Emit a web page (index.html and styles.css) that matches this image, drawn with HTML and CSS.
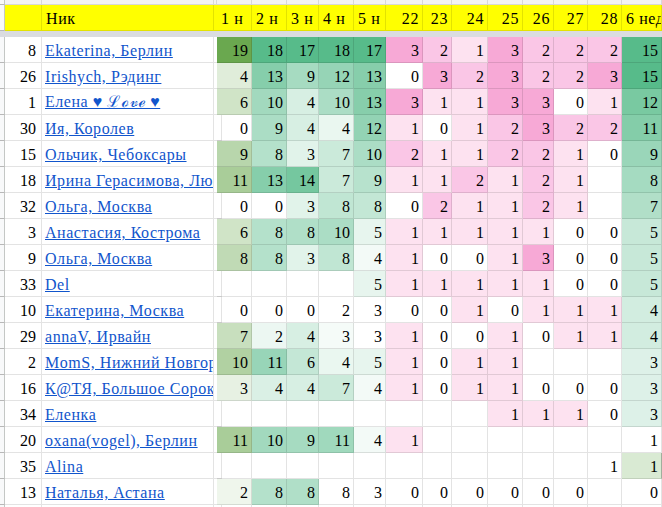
FILE: index.html
```html
<!DOCTYPE html>
<html lang="ru">
<head>
<meta charset="utf-8">
<title>Таблица</title>
<link rel="stylesheet" href="styles.css">
</head>
<body>
<div class="sheet">
  <div class="row top">
    <div class="rh"></div><div class="c"></div><div class="c"></div><div class="c"></div><div class="c"></div><div class="c"></div><div class="c"></div><div class="c"></div><div class="c"></div><div class="c"></div><div class="c"></div><div class="c"></div><div class="c"></div><div class="c"></div><div class="c"></div><div class="c"></div><div class="c"></div>
  </div>
  <div class="row hd">
    <div class="rh"></div><div class="c"></div><div class="c">Ник</div><div class="c"></div><div class="c">1 н</div><div class="c">2 н</div><div class="c">3 н</div><div class="c">4 н</div><div class="c">5 н</div><div class="c n">22</div><div class="c n">23</div><div class="c n">24</div><div class="c n">25</div><div class="c n">26</div><div class="c n">27</div><div class="c n">28</div><div class="c">6 нед</div>
  </div>
  <div class="sep"></div>

  <div class="row">
    <div class="rh"></div><div class="c n rk">8</div><div class="c nm"><a href="#">Ekaterina, Берлин</a></div><div class="c"></div>
    <div class="c n" style="background:#6aa84f">19</div><div class="c n" style="background:#57bb8a">18</div><div class="c n" style="background:#57bb8a">17</div><div class="c n" style="background:#57bb8a">18</div><div class="c n" style="background:#57bb8a">17</div>
    <div class="c n p3">3</div><div class="c n p2">2</div><div class="c n p1">1</div><div class="c n p3">3</div><div class="c n p2">2</div><div class="c n p2">2</div><div class="c n p2">2</div>
    <div class="c n" style="background:#57bb8a">15</div>
  </div>
  <div class="row">
    <div class="rh"></div><div class="c n rk">26</div><div class="c nm"><a href="#">Irishych, Рэдинг</a></div><div class="c"></div>
    <div class="c n" style="background:#e0edda">4</div><div class="c n" style="background:#86ceab">13</div><div class="c n" style="background:#a6dbc1">9</div><div class="c n" style="background:#96d4b6">12</div><div class="c n" style="background:#87ceab">13</div>
    <div class="c n">0</div><div class="c n p3">3</div><div class="c n p2">2</div><div class="c n p3">3</div><div class="c n p2">2</div><div class="c n p2">2</div><div class="c n p3">3</div>
    <div class="c n" style="background:#57bb8a">15</div>
  </div>
  <div class="row">
    <div class="rh"></div><div class="c n rk">1</div><div class="c nm"><a href="#">Елена ♥ ℒℴ𝓋ℯ ♥</a></div><div class="c"></div>
    <div class="c n" style="background:#d0e4c7">6</div><div class="c n" style="background:#a2d9be">10</div><div class="c n" style="background:#d7efe3">4</div><div class="c n" style="background:#abddc5">10</div><div class="c n" style="background:#87ceab">13</div>
    <div class="c n p3">3</div><div class="c n p1">1</div><div class="c n p1">1</div><div class="c n p3">3</div><div class="c n p3">3</div><div class="c n">0</div><div class="c n p1">1</div>
    <div class="c n" style="background:#79c9a1">12</div>
  </div>
  <div class="row">
    <div class="rh"></div><div class="c n rk">30</div><div class="c nm"><a href="#">Ия, Королев</a></div><div class="c"></div>
    <div class="c n">0</div><div class="c n" style="background:#abddc5">9</div><div class="c n" style="background:#d7efe3">4</div><div class="c n" style="background:#eaf7f0">4</div><div class="c n" style="background:#93d3b4">12</div>
    <div class="c n p1">1</div><div class="c n">0</div><div class="c n p1">1</div><div class="c n p2">2</div><div class="c n p3">3</div><div class="c n p2">2</div><div class="c n p2">2</div>
    <div class="c n" style="background:#84cda9">11</div>
  </div>
  <div class="row">
    <div class="rh"></div><div class="c n rk">15</div><div class="c nm"><a href="#">Ольчик, Чебоксары</a></div><div class="c"></div>
    <div class="c n" style="background:#b8d6ac">9</div><div class="c n" style="background:#b4e1cb">8</div><div class="c n" style="background:#e1f3ea">3</div><div class="c n" style="background:#cbeada">7</div><div class="c n" style="background:#abddc5">10</div>
    <div class="c n p2">2</div><div class="c n p1">1</div><div class="c n p1">1</div><div class="c n p2">2</div><div class="c n p2">2</div><div class="c n p1">1</div><div class="c n">0</div>
    <div class="c n" style="background:#9ad6b9">9</div>
  </div>
  <div class="row">
    <div class="rh"></div><div class="c n rk">18</div><div class="c nm"><a href="#">Ирина Герасимова, Люберцы</a></div><div class="c"></div>
    <div class="c n" style="background:#a9cd99">11</div><div class="c n" style="background:#86ceab">13</div><div class="c n" style="background:#75c79f">14</div><div class="c n" style="background:#cbeada">7</div><div class="c n" style="background:#b7e2cd">9</div>
    <div class="c n p1">1</div><div class="c n p1">1</div><div class="c n p2">2</div><div class="c n p1">1</div><div class="c n p2">2</div><div class="c n p1">1</div><div class="c n"></div>
    <div class="c n" style="background:#a5dbc1">8</div>
  </div>
  <div class="row">
    <div class="rh"></div><div class="c n rk">32</div><div class="c nm"><a href="#">Ольга, Москва</a></div><div class="c"></div>
    <div class="c n">0</div><div class="c n">0</div><div class="c n" style="background:#e1f3ea">3</div><div class="c n" style="background:#c0e6d3">8</div><div class="c n" style="background:#c3e7d5">8</div>
    <div class="c n">0</div><div class="c n p2">2</div><div class="c n p1">1</div><div class="c n p1">1</div><div class="c n p2">2</div><div class="c n p1">1</div><div class="c n"></div>
    <div class="c n" style="background:#b1dfc8">7</div>
  </div>
  <div class="row">
    <div class="rh"></div><div class="c n rk">3</div><div class="c nm"><a href="#">Анастасия, Кострома</a></div><div class="c"></div>
    <div class="c n" style="background:#d0e4c7">6</div><div class="c n" style="background:#b4e1cb">8</div><div class="c n" style="background:#b0dfc8">8</div><div class="c n" style="background:#abddc5">10</div><div class="c n" style="background:#e7f5ee">5</div>
    <div class="c n p1">1</div><div class="c n p1">1</div><div class="c n p1">1</div><div class="c n p1">1</div><div class="c n p1">1</div><div class="c n">0</div><div class="c n">0</div>
    <div class="c n" style="background:#c7e8d8">5</div>
  </div>
  <div class="row">
    <div class="rh"></div><div class="c n rk">9</div><div class="c nm"><a href="#">Ольга, Москва</a></div><div class="c"></div>
    <div class="c n" style="background:#c0dab5">8</div><div class="c n" style="background:#b4e1cb">8</div><div class="c n" style="background:#e1f3ea">3</div><div class="c n" style="background:#c0e6d3">8</div><div class="c n" style="background:#f3faf7">4</div>
    <div class="c n p1">1</div><div class="c n">0</div><div class="c n">0</div><div class="c n p1">1</div><div class="c n p3">3</div><div class="c n">0</div><div class="c n">0</div>
    <div class="c n" style="background:#c7e8d8">5</div>
  </div>
  <div class="row">
    <div class="rh"></div><div class="c n rk">33</div><div class="c nm"><a href="#">Del</a></div><div class="c"></div>
    <div class="c n"></div><div class="c n"></div><div class="c n"></div><div class="c n"></div><div class="c n" style="background:#e7f5ee">5</div>
    <div class="c n p1">1</div><div class="c n p1">1</div><div class="c n p1">1</div><div class="c n p1">1</div><div class="c n p1">1</div><div class="c n">0</div><div class="c n">0</div>
    <div class="c n" style="background:#c7e8d8">5</div>
  </div>
  <div class="row">
    <div class="rh"></div><div class="c n rk">10</div><div class="c nm"><a href="#">Екатерина, Москва</a></div><div class="c"></div>
    <div class="c n">0</div><div class="c n">0</div><div class="c n">0</div><div class="c n">2</div><div class="c n">3</div>
    <div class="c n">0</div><div class="c n">0</div><div class="c n p1">1</div><div class="c n">0</div><div class="c n p1">1</div><div class="c n p1">1</div><div class="c n p1">1</div>
    <div class="c n" style="background:#d2ede0">4</div>
  </div>
  <div class="row">
    <div class="rh"></div><div class="c n rk">29</div><div class="c nm"><a href="#">annaV, Ирвайн</a></div><div class="c"></div>
    <div class="c n" style="background:#c8dfbe">7</div><div class="c n" style="background:#ecf7f2">2</div><div class="c n" style="background:#d7efe3">4</div><div class="c n" style="background:#f5fbf8">3</div><div class="c n">3</div>
    <div class="c n p1">1</div><div class="c n">0</div><div class="c n">0</div><div class="c n p1">1</div><div class="c n">0</div><div class="c n p1">1</div><div class="c n p1">1</div>
    <div class="c n" style="background:#d2ede0">4</div>
  </div>
  <div class="row">
    <div class="rh"></div><div class="c n rk">2</div><div class="c nm"><a href="#">MomS, Нижний Новгород</a></div><div class="c"></div>
    <div class="c n" style="background:#b1d1a2">10</div><div class="c n" style="background:#98d5b8">11</div><div class="c n" style="background:#c4e7d6">6</div><div class="c n" style="background:#eaf7f0">4</div><div class="c n" style="background:#e7f5ee">5</div>
    <div class="c n p1">1</div><div class="c n">0</div><div class="c n p1">1</div><div class="c n p1">1</div><div class="c n"></div><div class="c n"></div><div class="c n"></div>
    <div class="c n" style="background:#ddf1e8">3</div>
  </div>
  <div class="row">
    <div class="rh"></div><div class="c n rk">16</div><div class="c nm"><a href="#">К@ТЯ, Большое Сорокино</a></div><div class="c"></div>
    <div class="c n" style="background:#e7f1e3">3</div><div class="c n" style="background:#daf0e5">4</div><div class="c n" style="background:#d7efe3">4</div><div class="c n" style="background:#cbeada">7</div><div class="c n" style="background:#f3faf7">4</div>
    <div class="c n p1">1</div><div class="c n">0</div><div class="c n p1">1</div><div class="c n p1">1</div><div class="c n">0</div><div class="c n">0</div><div class="c n">0</div>
    <div class="c n" style="background:#ddf1e8">3</div>
  </div>
  <div class="row">
    <div class="rh"></div><div class="c n rk">34</div><div class="c nm"><a href="#">Еленка</a></div><div class="c"></div>
    <div class="c n"></div><div class="c n"></div><div class="c n"></div><div class="c n"></div><div class="c n"></div>
    <div class="c n"></div><div class="c n"></div><div class="c n"></div><div class="c n p1">1</div><div class="c n p1">1</div><div class="c n p1">1</div><div class="c n">0</div>
    <div class="c n" style="background:#ddf1e8">3</div>
  </div>
  <div class="row">
    <div class="rh"></div><div class="c n rk">20</div><div class="c nm"><a href="#">oxana(vogel), Берлин</a></div><div class="c"></div>
    <div class="c n" style="background:#a9cd99">11</div><div class="c n" style="background:#a2d9be">10</div><div class="c n" style="background:#a6dbc1">9</div><div class="c n" style="background:#a0d9bd">11</div><div class="c n" style="background:#f3faf7">4</div>
    <div class="c n p1">1</div><div class="c n"></div><div class="c n"></div><div class="c n"></div><div class="c n"></div><div class="c n"></div><div class="c n"></div>
    <div class="c n">1</div>
  </div>
  <div class="row">
    <div class="rh"></div><div class="c n rk">35</div><div class="c nm"><a href="#">Alina</a></div><div class="c"></div>
    <div class="c n"></div><div class="c n"></div><div class="c n"></div><div class="c n"></div><div class="c n"></div>
    <div class="c n"></div><div class="c n"></div><div class="c n"></div><div class="c n"></div><div class="c n"></div><div class="c n"></div><div class="c n">1</div>
    <div class="c n hl" style="background:#d9ead3">1</div>
  </div>
  <div class="row">
    <div class="rh"></div><div class="c n rk">13</div><div class="c nm"><a href="#">Наталья, Астана</a></div><div class="c"></div>
    <div class="c n" style="background:#eff6ec">2</div><div class="c n" style="background:#b4e1cb">8</div><div class="c n" style="background:#b0dfc8">8</div><div class="c n">8</div><div class="c n">3</div>
    <div class="c n">0</div><div class="c n">0</div><div class="c n">0</div><div class="c n">0</div><div class="c n">0</div><div class="c n">0</div><div class="c n"></div>
    <div class="c n">0</div>
  </div>
  <div class="row">
    <div class="rh"></div><div class="c"></div><div class="c"></div><div class="c"></div><div class="c"></div><div class="c"></div><div class="c"></div><div class="c"></div><div class="c"></div><div class="c"></div><div class="c"></div><div class="c"></div><div class="c"></div><div class="c"></div><div class="c"></div><div class="c"></div><div class="c"></div>
  </div>
</div>
</body>
</html>
```
FILE: styles.css
```css
html, body {
  margin: 0;
  padding: 0;
}
body {
  width: 662px;
  height: 507px;
  overflow: hidden;
  background: #ffffff;
  color: #000000;
  font-family: "Liberation Serif", "Times New Roman", "DejaVu Serif", serif;
  font-size: 16px;
}
.sheet {
  width: 662px;
}
.row {
  display: grid;
  grid-template-columns: 5px 37px 172px 3px 35px 35px 32px 35px 32px 37px 29px 36px 35px 31px 34px 34px 40px;
  height: 26px;
}
.row.top {
  height: 5px;
}
.row.top .c {
  padding: 0;
  background: #f3f3f3;
}
.row.hd .c {
  background: #ffff00;
  letter-spacing: 0.6px;
}
.sep {
  height: 6px;
  background: #dadce0;
}
.rh {
  box-sizing: border-box;
  background: #f8f9fa;
  border-right: 1px solid #c4c7c5;
  border-bottom: 1px solid #b8b8b8;
}
.c {
  box-sizing: border-box;
  min-width: 0;
  display: flex;
  align-items: flex-end;
  justify-content: flex-start;
  padding: 0 3px 2px 4px;
  white-space: nowrap;
  overflow: hidden;
  border-right: 1px solid rgba(0, 0, 0, 0.11);
  border-bottom: 1px solid rgba(0, 0, 0, 0.11);
}
.n {
  justify-content: flex-end;
}
.rk {
  padding-right: 5px;
}
.nm {
  padding-left: 3px;
  justify-content: flex-start;
}
.nm a {
  color: #1155cc;
  text-decoration: underline;
  letter-spacing: 0.55px;
}
.hl {
  border-right-color: rgba(0, 0, 0, 0.25);
}
.p1 {
  background: #fde2f0;
}
.p2 {
  background: #fac6e6;
}
.p3 {
  background: #f7a9d6;
}
```
